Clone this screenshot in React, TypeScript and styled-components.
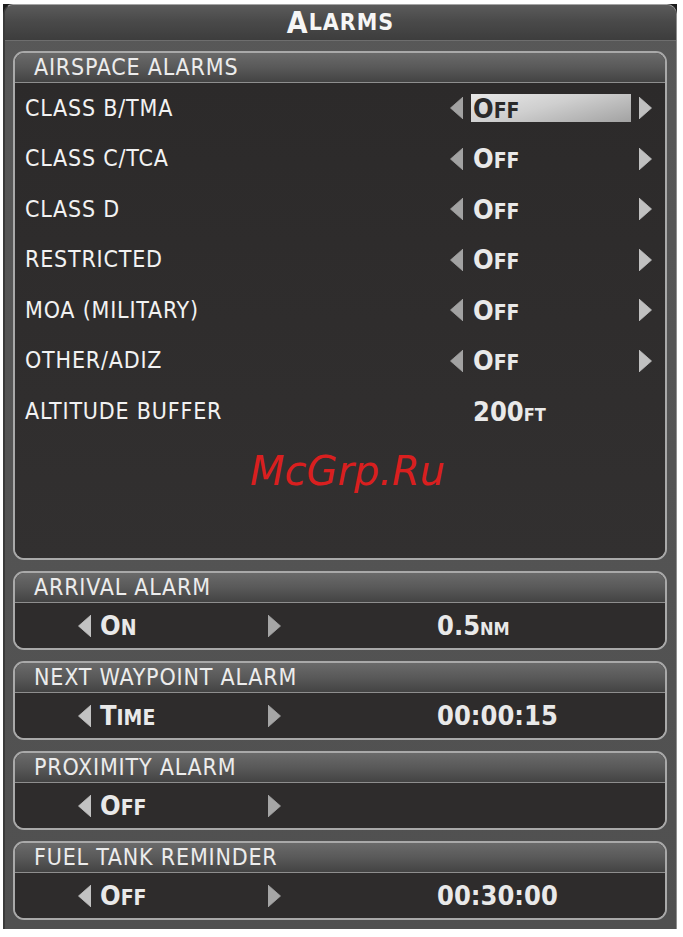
import React from "react";
import styled, { createGlobalStyle } from "styled-components";

const GlobalStyle = createGlobalStyle`
  html, body { margin: 0; padding: 0; background: #ffffff; }
  body {
    font-family: "DejaVu Sans Condensed", "DejaVu Sans", sans-serif;
    font-stretch: condensed;
  }
`;

const Screen = styled.div`
  margin: 4px 0 0 3px;
  width: 674px;
  height: 925px;
  background: #1c1c1c;
`;

const Frame = styled.div`
  box-sizing: border-box;
  height: 100%;
  display: flex;
  flex-direction: column;
  background: linear-gradient(180deg, #585858 0%, #505050 100%);
  border-radius: 10px 10px 0 0;
  border-top: 1px solid #a4a4a4;
  border-left: 2px solid #3a3a3a;
  border-right: 1px solid #8e8e8e;
  overflow: hidden;
`;

const TitleBar = styled.div`
  height: 35px;
  flex: none;
  display: flex;
  align-items: center;
  justify-content: center;
  background: linear-gradient(180deg, #5b5b5b 0%, #4a4a4a 45%, #3d3d3d 100%);
  border-bottom: 1px solid #6e6e6e;
  color: #f6f6f6;
  font-weight: bold;
  letter-spacing: 1px;
  line-height: 1;
`;

const Content = styled.div`
  display: flex;
  flex-direction: column;
  gap: 11px;
  padding: 10px 9px 0 8px;
`;

const Section = styled.section<{ $height: number }>`
  box-sizing: border-box;
  height: ${(p) => p.$height}px;
  display: flex;
  flex-direction: column;
  border: 2px solid #a9a9a9;
  border-radius: 11px;
  background: #2e2c2c;
  overflow: hidden;
`;

const SectionHeader = styled.div`
  height: 29px;
  flex: none;
  display: flex;
  align-items: center;
  padding-left: 19px;
  background: linear-gradient(180deg, #6a6a6a 0%, #595959 50%, #434343 100%);
  border-bottom: 1px solid #8e8e8e;
  color: #ececec;
  font-size: 23px;
  letter-spacing: 0.8px;
  line-height: 1;
`;

const AirspaceBody = styled.div`
  position: relative;
  flex: 1;
  display: flex;
  flex-direction: column;
  background: linear-gradient(180deg, #2c2a2a 0%, #323030 100%);
`;

const Row = styled.div`
  height: 50.5px;
  flex: none;
  display: grid;
  grid-template-columns: 1fr 203px;
  align-items: center;
  padding: 0 12px 0 10px;
`;

const Label = styled.span`
  color: #f2f2f2;
  font-size: 23px;
  letter-spacing: 0.8px;
  line-height: 1;
  white-space: nowrap;
`;

const Picker = styled.div`
  display: flex;
  align-items: center;
  gap: 8px;
`;

const ValueBox = styled.div<{ $selected?: boolean }>`
  box-sizing: border-box;
  width: 160px;
  height: 28px;
  display: flex;
  align-items: center;
  padding-left: 2px;
  color: ${(p) => (p.$selected ? "#2a2a2a" : "#e9e9e9")};
  background: ${(p) =>
    p.$selected
      ? "linear-gradient(165deg, #e8e8e8 0%, #cfcfcf 45%, #a2a2a2 100%)"
      : "transparent"};
`;

const Value = styled.span`
  font-weight: bold;
  line-height: 1;
  white-space: nowrap;
  color: inherit;
`;

const Big = styled.span`
  font-size: 27px;
`;

const Small = styled.span<{ $size?: number }>`
  font-size: ${(p) => p.$size ?? 21}px;
`;

const ArrowSvg = styled.svg<{ $hidden?: boolean }>`
  flex: none;
  display: block;
  visibility: ${(p) => (p.$hidden ? "hidden" : "visible")};
`;

const Watermark = styled.div`
  position: absolute;
  left: 235px;
  top: 368px;
  font-family: "DejaVu Sans", sans-serif;
  font-stretch: normal;
  font-style: italic;
  font-size: 40px;
  line-height: 1;
  color: #d91f1f;
  pointer-events: none;
`;

const AlarmBody = styled.div`
  flex: 1;
  display: flex;
  align-items: center;
  padding-left: 63px;
  background: #2e2c2c;
`;

const Selector = styled.div`
  width: 203px;
  display: flex;
  align-items: center;
  gap: 9px;
  color: #e9e9e9;
`;

const Push = styled.div`
  margin-left: auto;
  display: flex;
`;

const Setting = styled.div`
  margin-left: 156px;
  color: #e9e9e9;
`;

type ArrowProps = { dir: "left" | "right"; color: string; hidden?: boolean };

const Arrow = ({ dir, color, hidden }: ArrowProps) => (
  <ArrowSvg $hidden={hidden} width={13} height={22} viewBox="0 0 13 22">
    <polygon
      points={dir === "left" ? "13,0 13,22 0.5,11" : "0,0 0,22 12.5,11"}
      fill={color}
      strokeLinejoin="round"
      stroke={color}
      strokeWidth={0.8}
    />
  </ArrowSvg>
);

const Off = () => (
  <Value>
    <Big>O</Big>
    <Small>FF</Small>
  </Value>
);

const airspace = [
  "CLASS B/TMA",
  "CLASS C/TCA",
  "CLASS D",
  "RESTRICTED",
  "MOA (MILITARY)",
  "OTHER/ADIZ",
];

type AlarmProps = {
  title: string;
  option: React.ReactNode;
  setting?: React.ReactNode;
};

const AlarmSection = ({ title, option, setting }: AlarmProps) => (
  <Section $height={79}>
    <SectionHeader>{title}</SectionHeader>
    <AlarmBody>
      <Selector>
        <Arrow dir="left" color="#c2c2c2" />
        {option}
        <Push>
          <Arrow dir="right" color="#a6a6a6" />
        </Push>
      </Selector>
      {setting && <Setting>{setting}</Setting>}
    </AlarmBody>
  </Section>
);

export default function App() {
  return (
    <>
      <GlobalStyle />
      <Screen>
        <Frame>
          <TitleBar>
            <span style={{ fontSize: 30 }}>A</span>
            <span style={{ fontSize: 23 }}>LARMS</span>
          </TitleBar>
          <Content>
            <Section $height={509}>
              <SectionHeader>AIRSPACE ALARMS</SectionHeader>
              <AirspaceBody>
                {airspace.map((name, i) => (
                  <Row key={name}>
                    <Label>{name}</Label>
                    <Picker>
                      <Arrow dir="left" color="#a2a2a2" />
                      <ValueBox $selected={i === 0}>
                        <Off />
                      </ValueBox>
                      <Arrow dir="right" color="#c0c0c0" />
                    </Picker>
                  </Row>
                ))}
                <Row>
                  <Label>ALTITUDE BUFFER</Label>
                  <Picker>
                    <Arrow dir="left" color="#a2a2a2" hidden />
                    <ValueBox>
                      <Value>
                        <Big>200</Big>
                        <Small $size={18}>FT</Small>
                      </Value>
                    </ValueBox>
                    <Arrow dir="right" color="#c0c0c0" hidden />
                  </Picker>
                </Row>
                <Watermark>McGrp.Ru</Watermark>
              </AirspaceBody>
            </Section>
            <AlarmSection
              title="ARRIVAL ALARM"
              option={
                <Value>
                  <Big>O</Big>
                  <Small>N</Small>
                </Value>
              }
              setting={
                <Value>
                  <Big>0.5</Big>
                  <Small $size={18}>NM</Small>
                </Value>
              }
            />
            <AlarmSection
              title="NEXT WAYPOINT ALARM"
              option={
                <Value>
                  <Big>T</Big>
                  <Small>IME</Small>
                </Value>
              }
              setting={
                <Value>
                  <Big>00:00:15</Big>
                </Value>
              }
            />
            <AlarmSection title="PROXIMITY ALARM" option={<Off />} />
            <AlarmSection
              title="FUEL TANK REMINDER"
              option={<Off />}
              setting={
                <Value>
                  <Big>00:30:00</Big>
                </Value>
              }
            />
          </Content>
        </Frame>
      </Screen>
    </>
  );
}
